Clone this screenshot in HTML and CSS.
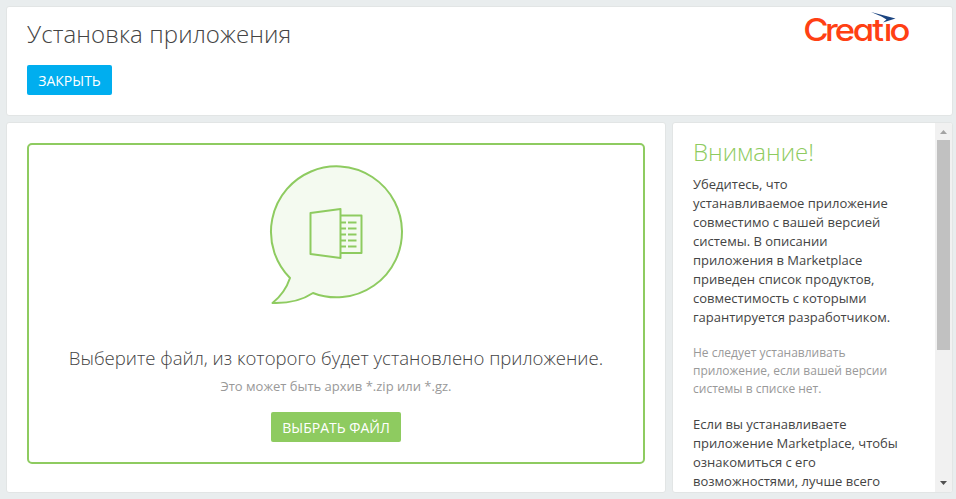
FILE: index.html
```html
<!DOCTYPE html>
<html lang="ru">
<head>
<meta charset="utf-8">
<title>Установка приложения</title>
<link rel="stylesheet" href="styles.css">
</head>
<body>
<div class="page">
  <header class="panel header">
    <div>
      <h1 class="title">Установка приложения</h1>
      <button class="btn btn-close">ЗАКРЫТЬ</button>
    </div>
    <svg class="logo" width="120" height="48" viewBox="0 0 120 48" aria-label="Creatio">
      <text class="logo-text" transform="scale(1.1 1)" y="33.5" x="2.9 22.7 31.500 48 65.800 76.2 81.300">Creatio</text>
      <path d="M84 2h10v14h-10z" fill="#fff"/>
      <path d="M71 4 95.500 10.500 83 14.500 86.500 11.500 81.500 8.500z" fill="#1b4480"/>
    </svg>
  </header>
  <div class="content">
    <main class="panel main">
      <section class="drop">
        <svg class="bubble" width="136" height="142" viewBox="0 0 136 142" fill="none" stroke="#8ecb60" stroke-width="2" stroke-linejoin="round">
          <path d="M21 115A65.5 65.5 0 1 1 44 130C32 138 18 140.500 3.500 140 11 134 17 127 21 115Z" fill="#f4faf0"/>
          <path d="M41.500 50 71.500 46V95L41.500 91ZM72 52.500H92.500V90H72"/>
          <path d="M72 59.500H77M79 59.500H87.500M72 65.500H77M79 65.500H87.500M72 71.500H77M79 71.500H87.500M72 77.500H77M79 77.500H87.500M72 83.500H77M79 83.500H87.500"/>
        </svg>
        <h2 class="lead">Выберите файл, из которого будет установлено приложение.</h2>
        <p class="hint">Это может быть архив *.zip или *.gz.</p>
        <button class="btn btn-file">ВЫБРАТЬ ФАЙЛ</button>
      </section>
    </main>
    <aside class="panel side">
      <div class="side-text">
        <h2 class="warn">Внимание!</h2>
        <p class="para">Убедитесь, что<br>устанавливаемое приложение<br>совместимо с вашей версией<br>системы. В описании<br>приложения в Marketplace<br>приведен список продуктов,<br>совместимость с которыми<br>гарантируется разработчиком.</p>
        <p class="note">Не следует устанавливать<br>приложение, если вашей версии<br>системы в списке нет.</p>
        <p class="para">Если вы устанавливаете<br>приложение Marketplace, чтобы<br>ознакомиться с его<br>возможностями, лучше всего</p>
      </div>
      <div class="scroll">
        <svg class="arrow" width="7" height="4" viewBox="0 0 7 4"><path d="M0 4 3.500 0 7 4z" fill="#a3a3a3"/></svg>
        <div class="thumb"></div>
        <svg class="arrow arrow-down" width="7" height="4" viewBox="0 0 7 4"><path d="M0 0H7L3.500 4z" fill="#505050"/></svg>
      </div>
    </aside>
  </div>
</div>
</body>
</html>
```
FILE: styles.css
```css
* { box-sizing: border-box; }
body { margin: 0; background: #e9edee; font-family: "Open Sans", sans-serif; color: #444; }
h1, h2, p { margin: 0; font-weight: 400; }
.page { height: 499px; padding: 6px 3px 6px 6px; display: flex; flex-direction: column; gap: 6px; overflow: hidden; }
.panel { background: #fff; border: 1px solid #e2e5e5; border-radius: 3px; }
.header { height: 110px; flex: none; padding: 0 32px 0 20px; display: flex; justify-content: space-between; }
.title { font-size: 24px; font-weight: 300; line-height: 34px; padding-top: 10px; letter-spacing: 0.1px; white-space: nowrap; }
.btn { display: block; height: 30px; border: 0; border-radius: 2px; padding: 2px 0 0; color: #fff; font: 14px/28px "Open Sans", sans-serif; white-space: nowrap; }
.btn-close { width: 85px; margin-top: 14px; background: #00aeef; }
.logo { margin-top: 1px; overflow: visible; }
.logo-text { font-family: Inter, sans-serif; font-size: 31.5px; font-weight: 500; font-feature-settings: "cv11"; fill: #ff4013; }
.content { flex: 1; min-height: 0; display: flex; gap: 6px; }
.main { width: 660px; padding: 20px; }
.drop { height: 321px; border: 2px solid #8ecb60; border-radius: 5px; display: flex; flex-direction: column; align-items: center; }
.bubble { flex: none; margin: 18px 0 0 2px; }
.lead { font-size: 18.57px; font-weight: 300; line-height: 26px; margin-top: 40px; white-space: nowrap; }
.hint { font-size: 13px; line-height: 20px; margin-top: 5px; color: #999; white-space: nowrap; }
.btn-file { width: 130px; flex: none; margin-top: 16px; background: #8ecb60; }
.side { flex: 1; display: flex; overflow: hidden; }
.side-text { flex: 1; padding: 12px 0 0 20px; white-space: nowrap; }
.warn { font-size: 24px; font-weight: 300; line-height: 34px; color: #8ecb60; }
.para { font-size: 13px; line-height: 19px; margin-top: 6px; }
.note { font-size: 12px; line-height: 18px; margin: 17px 0; color: #999; }
.note + .para { margin-top: 17px; }
.scroll { width: 17px; background: #f1f1f1; display: flex; flex-direction: column; align-items: center; padding: 7px 0; }
.arrow { flex: none; }
.thumb { width: 13px; height: 210px; margin-top: 6px; background: #c1c1c1; }
.arrow-down { margin-top: auto; }
```
